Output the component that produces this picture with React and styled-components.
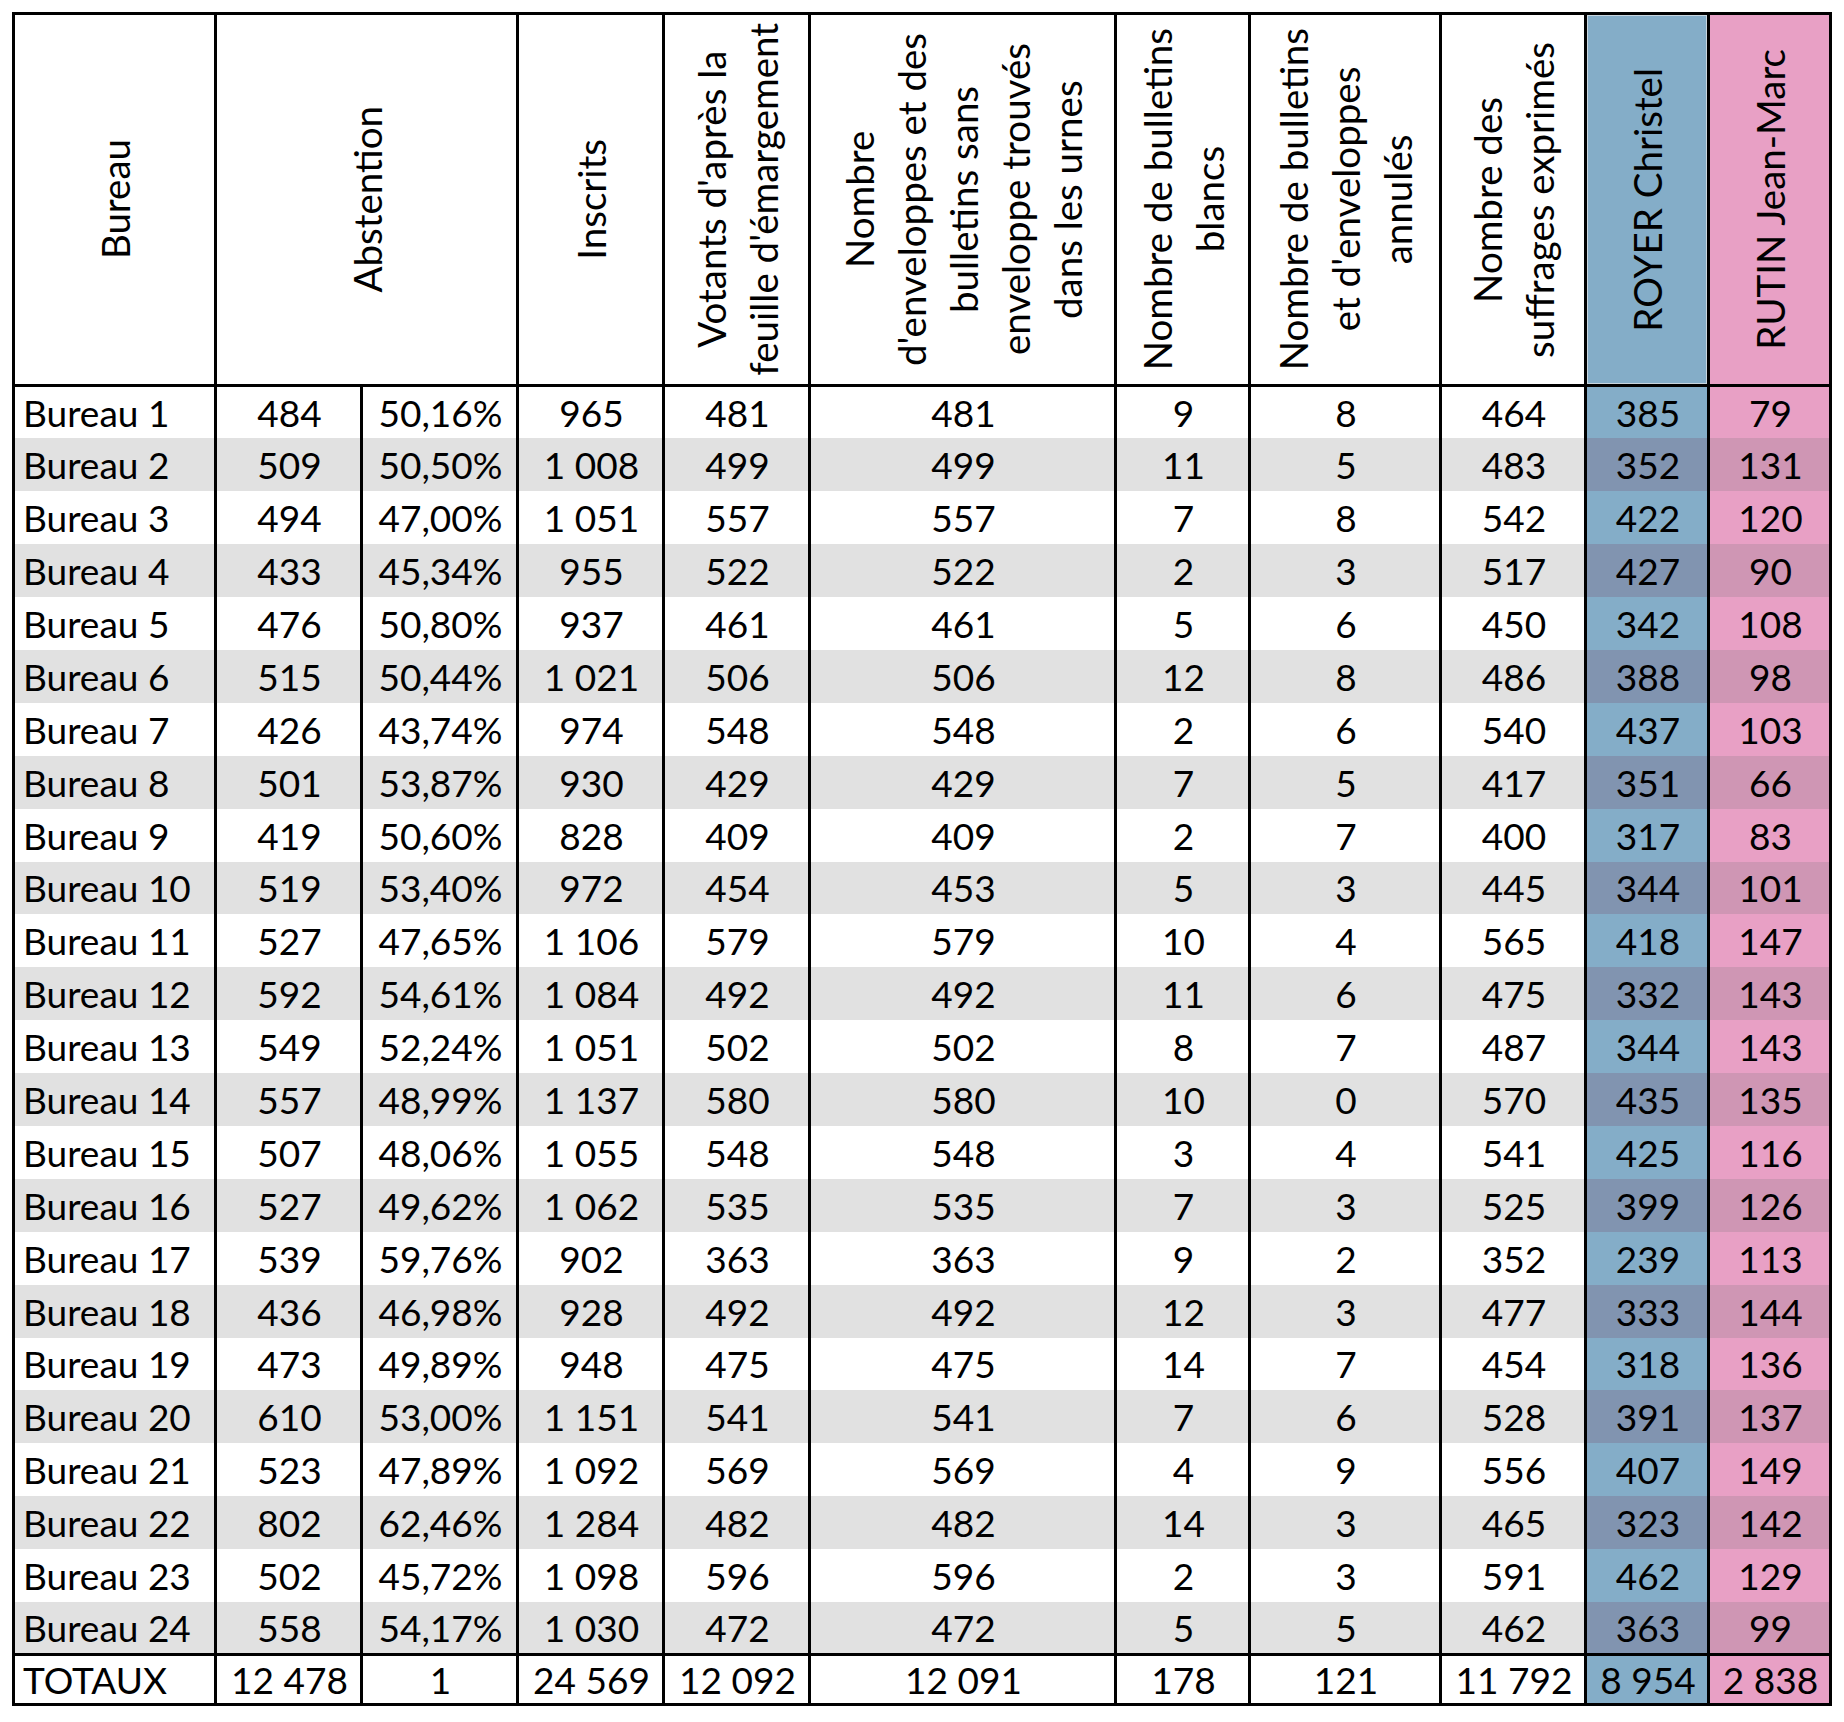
import React from "react";
import styled, { createGlobalStyle } from "styled-components";

const GlobalStyle = createGlobalStyle`
  html, body {
    margin: 0;
    padding: 0;
    background: #ffffff;
  }
  body {
    font-family: Lato, "Liberation Sans", sans-serif;
    color: #000000;
  }
`;

const widths = [202, 146, 156, 146, 146, 306, 134, 191, 145, 123, 122];

const rows = [
  ["Bureau 1", "484", "50,16%", "965", "481", "481", "9", "8", "464", "385", "79"],
  ["Bureau 2", "509", "50,50%", "1 008", "499", "499", "11", "5", "483", "352", "131"],
  ["Bureau 3", "494", "47,00%", "1 051", "557", "557", "7", "8", "542", "422", "120"],
  ["Bureau 4", "433", "45,34%", "955", "522", "522", "2", "3", "517", "427", "90"],
  ["Bureau 5", "476", "50,80%", "937", "461", "461", "5", "6", "450", "342", "108"],
  ["Bureau 6", "515", "50,44%", "1 021", "506", "506", "12", "8", "486", "388", "98"],
  ["Bureau 7", "426", "43,74%", "974", "548", "548", "2", "6", "540", "437", "103"],
  ["Bureau 8", "501", "53,87%", "930", "429", "429", "7", "5", "417", "351", "66"],
  ["Bureau 9", "419", "50,60%", "828", "409", "409", "2", "7", "400", "317", "83"],
  ["Bureau 10", "519", "53,40%", "972", "454", "453", "5", "3", "445", "344", "101"],
  ["Bureau 11", "527", "47,65%", "1 106", "579", "579", "10", "4", "565", "418", "147"],
  ["Bureau 12", "592", "54,61%", "1 084", "492", "492", "11", "6", "475", "332", "143"],
  ["Bureau 13", "549", "52,24%", "1 051", "502", "502", "8", "7", "487", "344", "143"],
  ["Bureau 14", "557", "48,99%", "1 137", "580", "580", "10", "0", "570", "435", "135"],
  ["Bureau 15", "507", "48,06%", "1 055", "548", "548", "3", "4", "541", "425", "116"],
  ["Bureau 16", "527", "49,62%", "1 062", "535", "535", "7", "3", "525", "399", "126"],
  ["Bureau 17", "539", "59,76%", "902", "363", "363", "9", "2", "352", "239", "113"],
  ["Bureau 18", "436", "46,98%", "928", "492", "492", "12", "3", "477", "333", "144"],
  ["Bureau 19", "473", "49,89%", "948", "475", "475", "14", "7", "454", "318", "136"],
  ["Bureau 20", "610", "53,00%", "1 151", "541", "541", "7", "6", "528", "391", "137"],
  ["Bureau 21", "523", "47,89%", "1 092", "569", "569", "4", "9", "556", "407", "149"],
  ["Bureau 22", "802", "62,46%", "1 284", "482", "482", "14", "3", "465", "323", "142"],
  ["Bureau 23", "502", "45,72%", "1 098", "596", "596", "2", "3", "591", "462", "129"],
  ["Bureau 24", "558", "54,17%", "1 030", "472", "472", "5", "5", "462", "363", "99"],
];

const totals = ["TOTAUX", "12 478", "1", "24 569", "12 092", "12 091", "178", "121", "11 792", "8 954", "2 838"];

const headers = [
  { lines: ["Bureau"] },
  { lines: ["Abstention"], span: 2 },
  { lines: ["Inscrits"] },
  { lines: ["Votants d'après la", "feuille d'émargement"] },
  { lines: ["Nombre", "d'enveloppes et des", "bulletins sans", "enveloppe trouvés", "dans les urnes"] },
  { lines: ["Nombre de bulletins", "blancs"] },
  { lines: ["Nombre de bulletins", "et d'enveloppes", "annulés"] },
  { lines: ["Nombre des", "suffrages exprimés"] },
  { lines: ["ROYER Christel"], tone: "royer" },
  { lines: ["RUTIN Jean-Marc"], tone: "rutin" },
];

const palette = {
  royer: { base: "#84adc8", alt: "#8194b0" },
  rutin: { base: "#e8a0c5", alt: "#cf96b4" },
  plain: { base: "#ffffff", alt: "#e1e1e1" },
};

const fill = (p) => palette[p.$tone || "plain"][p.$alt ? "alt" : "base"];

const Page = styled.div`
  padding: 12px 0 0 12px;
`;

const Table = styled.table`
  border-collapse: collapse;
  table-layout: fixed;
  width: 1820px;
  border: 3px solid #000;
`;

const HeadRow = styled.tr`
  height: 372px;
`;

const HeadCell = styled.th`
  border: 3px solid #000;
  padding: 0;
  font-weight: 400;
  background: ${fill};
  box-shadow: ${(p) => (p.$tone === "royer" ? "inset 0 0 0 1px #c9d6df" : "none")};
`;

const HeadBox = styled.div`
  height: 366px;
  display: flex;
  align-items: center;
  justify-content: center;
`;

const HeadText = styled.div`
  writing-mode: vertical-rl;
  transform: rotate(180deg);
  white-space: nowrap;
  text-align: center;
  font-size: 38.5px;
  line-height: 52px;
`;

const Row = styled.tr`
  height: 52.9px;
`;

const TotalRow = styled.tr`
  height: 50px;
  & > td {
    border-top: 3px solid #000;
  }
`;

const Cell = styled.td`
  border-left: 3px solid #000;
  border-right: 3px solid #000;
  padding: 0 6px 0 8px;
  font-size: 37px;
  white-space: nowrap;
  text-align: ${(p) => (p.$left ? "left" : "center")};
  background: ${fill};
`;

const toneFor = (i) => (i === 9 ? "royer" : i === 10 ? "rutin" : undefined);

export default function App() {
  return (
    <Page>
      <GlobalStyle />
      <Table>
        <colgroup>
          {widths.map((w, i) => (
            <col key={i} style={{ width: w }} />
          ))}
        </colgroup>
        <thead>
          <HeadRow>
            {headers.map((h, i) => (
              <HeadCell key={i} colSpan={h.span || 1} $tone={h.tone}>
                <HeadBox>
                  <HeadText>
                    {h.lines.map((l, j) => (
                      <React.Fragment key={j}>
                        {j > 0 && <br />}
                        {l}
                      </React.Fragment>
                    ))}
                  </HeadText>
                </HeadBox>
              </HeadCell>
            ))}
          </HeadRow>
        </thead>
        <tbody>
          {rows.map((r, ri) => (
            <Row key={ri}>
              {r.map((v, ci) => (
                <Cell key={ci} $left={ci === 0} $alt={ri % 2 === 1} $tone={toneFor(ci)}>
                  {v}
                </Cell>
              ))}
            </Row>
          ))}
          <TotalRow>
            {totals.map((v, ci) => (
              <Cell key={ci} $left={ci === 0} $tone={toneFor(ci)}>
                {v}
              </Cell>
            ))}
          </TotalRow>
        </tbody>
      </Table>
    </Page>
  );
}
